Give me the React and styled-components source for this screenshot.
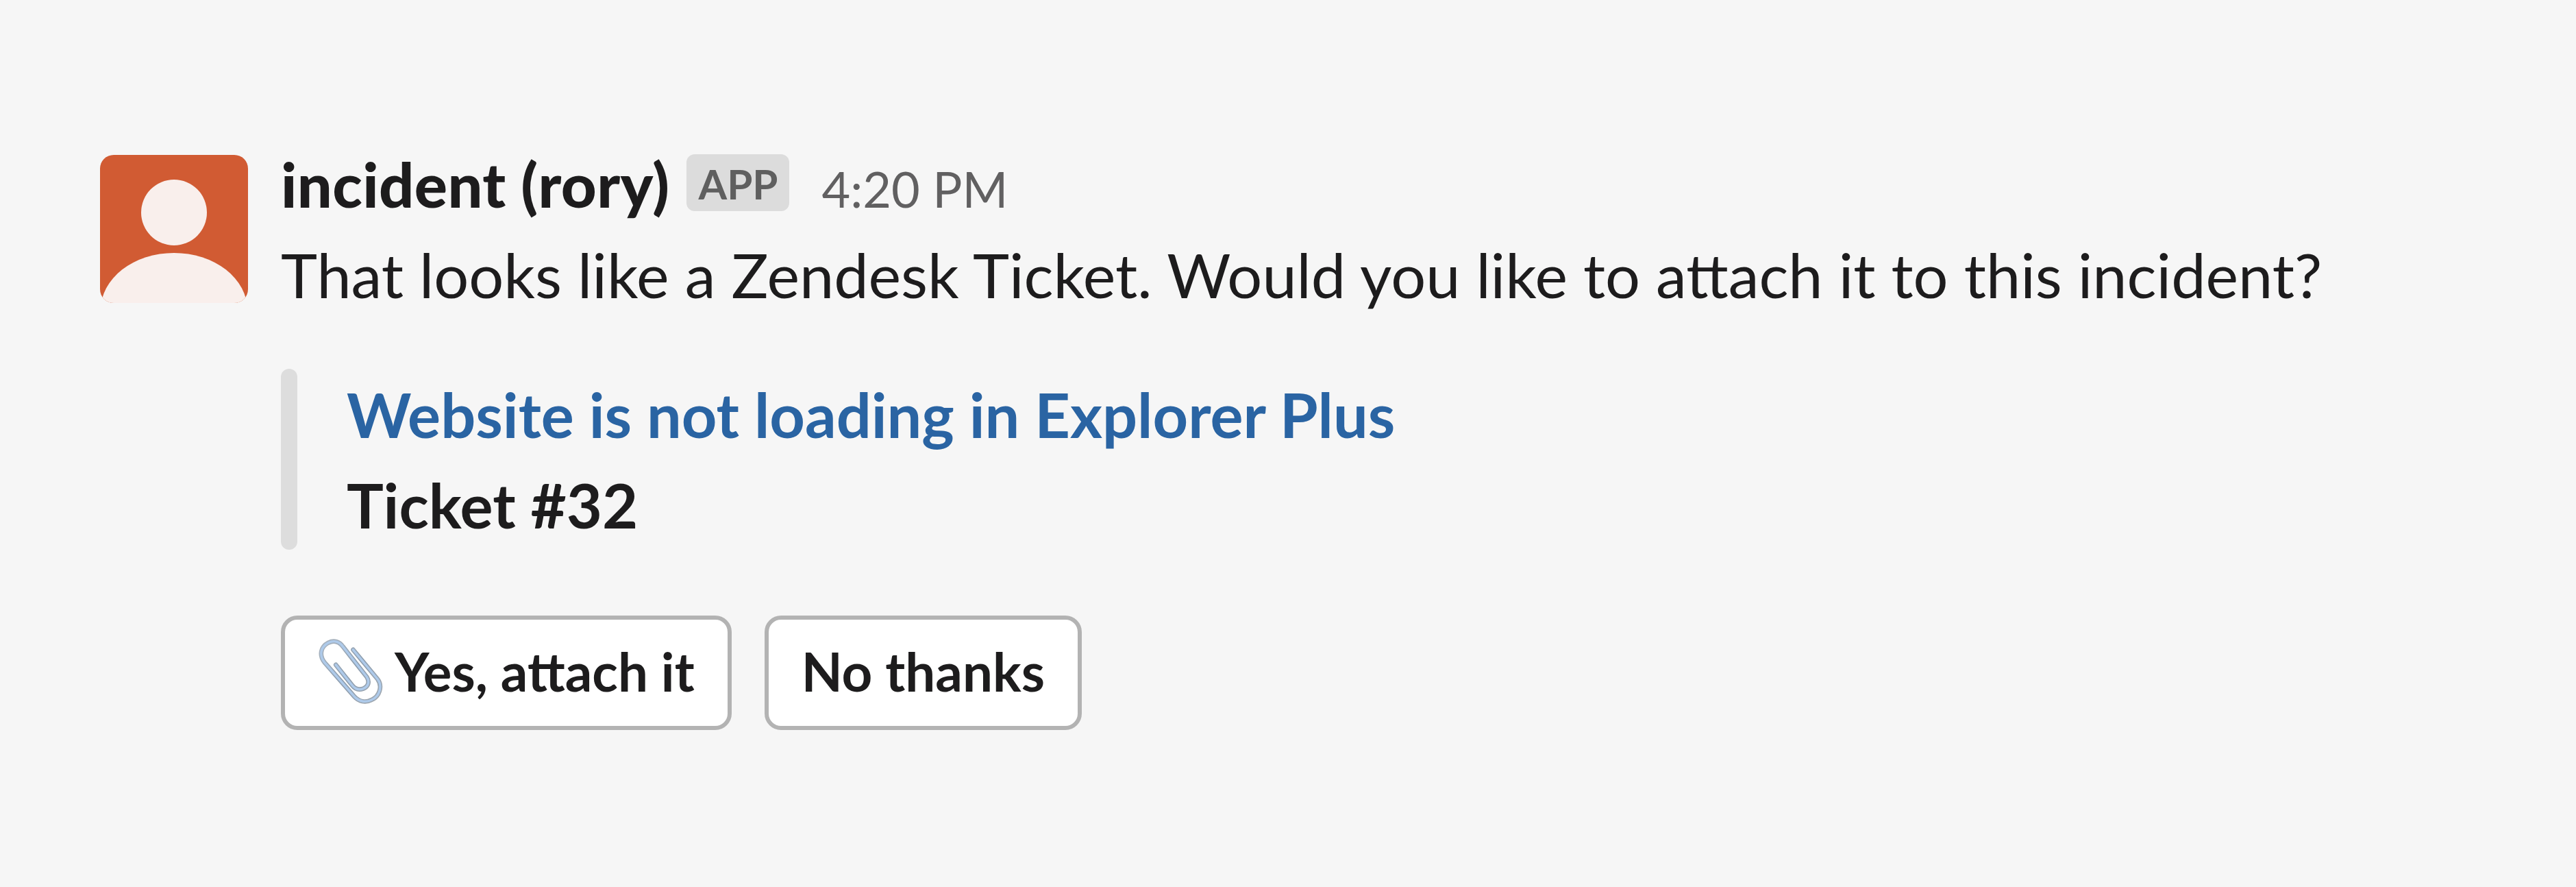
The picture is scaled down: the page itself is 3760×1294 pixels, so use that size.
import React from 'react';
import styled, { createGlobalStyle } from 'styled-components';

const GlobalStyle = createGlobalStyle`
    html, body {
        margin: 0;
        padding: 0;
        background-color: #f6f6f6;
    }
`;

const Page = styled.div`
    box-sizing: border-box;
    width: 3760px;
    height: 1294px;
    padding: 202px 0 0 146px;
    background-color: #f6f6f6;
    font-family: 'Lato', sans-serif;
    color: #1d1c1d;
`;

const Message = styled.div`
    display: flex;
    align-items: flex-start;
    gap: 48px;
`;

const Avatar = styled.svg`
    display: block;
    flex: none;
    width: 216px;
    height: 216px;
    margin-top: 24px;
`;

const Content = styled.div`
    display: flex;
    flex-direction: column;
`;

const Header = styled.div`
    display: flex;
    align-items: baseline;
    height: 132px;
`;

const Name = styled.span`
    font-size: 90px;
    line-height: 132px;
    font-weight: 900;
    letter-spacing: 0.4px;
`;

const Badge = styled.span`
    align-self: flex-start;
    box-sizing: border-box;
    width: 150px;
    height: 83px;
    margin: 23px 47px 0 25px;
    border-radius: 12px;
    background-color: #dcdcdc;
    color: #5f5f5f;
    font-size: 60px;
    font-weight: 700;
    line-height: 86px;
    text-align: center;
`;

const Time = styled.span`
    font-size: 72px;
    line-height: 132px;
    color: #616061;
`;

const Text = styled.div`
    font-size: 90px;
    line-height: 132px;
`;

const Attachment = styled.div`
    display: flex;
    gap: 72px;
    margin-top: 72px;
`;

const Bar = styled.div`
    width: 24px;
    border-radius: 12px;
    background-color: #dddddd;
`;

const TicketLink = styled.div`
    font-size: 90px;
    line-height: 132px;
    font-weight: 700;
    color: #2a64a3;
`;

const TicketId = styled.div`
    font-size: 90px;
    line-height: 132px;
    font-weight: 700;
`;

const Actions = styled.div`
    display: flex;
    gap: 48px;
    margin-top: 96px;
`;

const Button = styled.button`
    display: flex;
    align-items: center;
    gap: 17px;
    box-sizing: border-box;
    height: 167px;
    padding: 0 48px 5px;
    border: 6px solid #b3b3b3;
    border-radius: 24px;
    background-color: #ffffff;
    color: #1d1c1d;
    font-family: inherit;
    font-size: 78px;
    font-weight: 700;
`;

const Clip = styled.svg`
    display: block;
    flex: none;
    width: 95px;
    height: 95px;
`;

const clipPath = 'M155 42 L268 178 C292 210 278 258 240 274 C212 288 182 282 160 258 L22 100 C-4 66 6 28 40 10 C68 -4 92 6 108 28 L218 168 C232 190 226 212 202 222 C180 230 162 222 150 206 L75 112';

function App() {
    return (
        <Page>
            <GlobalStyle />
            <Message>
                <Avatar viewBox="0 0 216 216">
                    <defs>
                        <clipPath id="avatar-clip">
                            <rect width="216" height="216" rx="20" />
                        </clipPath>
                    </defs>
                    <g clipPath="url(#avatar-clip)">
                        <rect width="216" height="216" fill="#d15b33" />
                        <circle cx="108" cy="84" r="48" fill="#f9efec" />
                        <ellipse cx="108" cy="226" rx="107" ry="83" fill="#f9efec" />
                    </g>
                </Avatar>
                <Content>
                    <Header>
                        <Name>incident (rory)</Name>
                        <Badge>APP</Badge>
                        <Time>4:20 PM</Time>
                    </Header>
                    <Text>That looks like a Zendesk Ticket. Would you like to attach it to this incident?</Text>
                    <Attachment>
                        <Bar />
                        <div>
                            <TicketLink>Website is not loading in Explorer Plus</TicketLink>
                            <TicketId>Ticket #32</TicketId>
                        </div>
                    </Attachment>
                    <Actions>
                        <Button>
                            <Clip viewBox="-8 -8 301 301">
                                <defs>
                                    <linearGradient id="wire-edge" x1="0" y1="0" x2="1" y2="1">
                                        <stop offset="0" stopColor="#a9b4bf" />
                                        <stop offset="0.5" stopColor="#8d9dae" />
                                        <stop offset="1" stopColor="#a0a8b0" />
                                    </linearGradient>
                                </defs>
                                <path d={clipPath} fill="none" stroke="url(#wire-edge)" strokeWidth="21" strokeLinecap="round" />
                                <path d={clipPath} fill="none" stroke="#aecaea" strokeWidth="11" strokeLinecap="round" />
                            </Clip>
                            Yes, attach it
                        </Button>
                        <Button>No thanks</Button>
                    </Actions>
                </Content>
            </Message>
        </Page>
    );
}

export default App;
